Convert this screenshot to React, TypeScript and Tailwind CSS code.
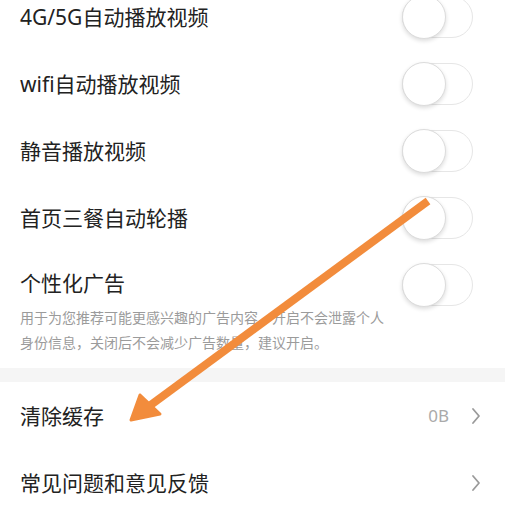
import React from "react";

const FONT = { fontFamily: '"Noto Sans", "Noto Sans CJK SC", sans-serif' };

function Toggle() {
  return (
    <div className="flex h-[42px] w-[71px] shrink-0 items-center rounded-full border border-[#e6e6e6] bg-white">
      <span className="-ml-px h-[44px] w-[44px] rounded-full border border-[#dcdcdc] bg-white shadow-[0_2px_4px_rgba(0,0,0,0.14)]" />
    </div>
  );
}

function Chevron() {
  return (
    <svg width="10" height="18" viewBox="0 0 10 18" className="shrink-0">
      <path d="M2 2 L8 9 L2 16" fill="none" stroke="#9a9a9a" strokeWidth="1.8" strokeLinecap="round" strokeLinejoin="round" />
    </svg>
  );
}

function SwitchRow({ label }: { label: string }) {
  return (
    <div className="flex h-[67px] items-center justify-between pl-5 pr-8">
      <span className="text-[21px] leading-7 text-[#222]">{label}</span>
      <Toggle />
    </div>
  );
}

function LinkRow({ label, value }: { label: string; value?: string }) {
  return (
    <div className="flex h-[67px] items-center justify-between pl-5 pr-[24px]">
      <span className="text-[21px] leading-7 text-[#222]">{label}</span>
      <div className="flex items-center gap-[22px]">
        {value ? <span className="text-[17px] text-[#aaa]">{value}</span> : null}
        <Chevron />
      </div>
    </div>
  );
}

export default function App() {
  return (
    <div className="relative h-[515px] w-full overflow-hidden bg-white" style={FONT}>
      <div className="-mt-[17px]">
        <SwitchRow label="4G/5G自动播放视频" />
        <SwitchRow label="wifi自动播放视频" />
        <SwitchRow label="静音播放视频" />
        <SwitchRow label="首页三餐自动轮播" />
        <div className="pb-[13px] pl-5 pr-8 pt-[18px]">
          <div className="flex h-7 items-center justify-between">
            <span className="text-[21px] leading-7 text-[#222]">个性化广告</span>
            <div className="mt-1">
              <Toggle />
            </div>
          </div>
          <p className="mt-2 w-[365px] text-[14px] leading-[25px] text-[#9b9b9b]">
            用于为您推荐可能更感兴趣的广告内容，开启不会泄露个人身份信息，关闭后不会减少广告数量，建议开启。
          </p>
        </div>
        <div className="h-[14px] bg-[#f5f5f5]" />
        <LinkRow label="清除缓存" value="0B" />
        <LinkRow label="常见问题和意见反馈" />
      </div>

      <svg className="pointer-events-none absolute inset-0" width="505" height="515" viewBox="0 0 505 515">
        <line x1="428" y1="201" x2="148" y2="407" stroke="#f28c3c" strokeWidth="8" />
        <polygon points="131,420 140,395 160,414" fill="#f28c3c" stroke="#f28c3c" strokeWidth="3" strokeLinejoin="round" />
      </svg>
    </div>
  );
}
